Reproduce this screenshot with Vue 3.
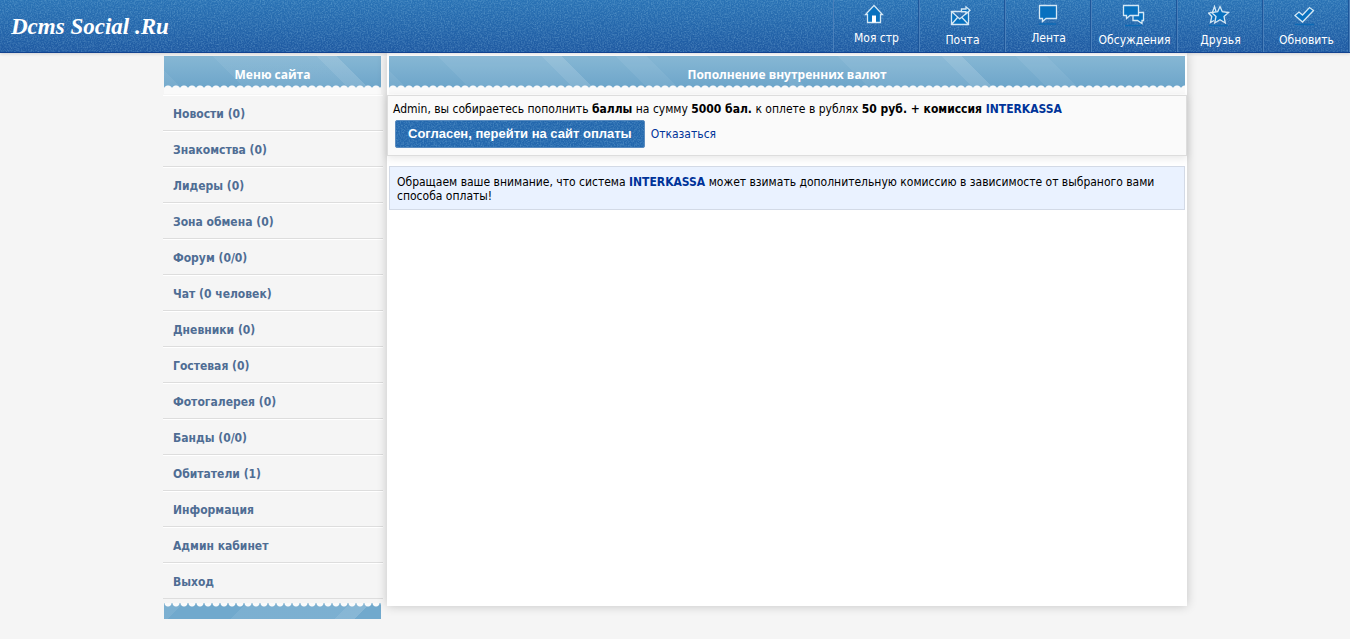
<script setup>
const nav = [
  { label: 'Моя стр', icon: 'home', tall: false },
  { label: 'Почта', icon: 'mail', tall: true },
  { label: 'Лента', icon: 'feed', tall: false },
  { label: 'Обсуждения', icon: 'talk', tall: true },
  { label: 'Друзья', icon: 'star', tall: true },
  { label: 'Обновить', icon: 'check', tall: true },
]
const menu = [
  'Новости (0)', 'Знакомства (0)', 'Лидеры (0)', 'Зона обмена (0)', 'Форум (0/0)',
  'Чат (0 человек)', 'Дневники (0)', 'Гостевая (0)', 'Фотогалерея (0)', 'Банды (0/0)',
  'Обитатели (1)', 'Информация', 'Админ кабинет', 'Выход',
]
</script>

<template>
  <div class="page">
    <header class="topbar">
      <svg class="grain" aria-hidden="true">
        <filter id="grain" x="0" y="0" width="100%" height="100%">
          <feTurbulence type="fractalNoise" baseFrequency="0.7" numOctaves="2" seed="4" />
          <feColorMatrix values="0 0 0 0 0.45  0 0 0 0 0.75  0 0 0 0 0.92  1.6 0 0 0 -0.62" />
        </filter>
        <rect width="100%" height="100%" filter="url(#grain)" />
      </svg>
      <a class="logo" href="#">Dcms Social .Ru</a>
      <nav class="nav">
        <a v-for="n in nav" :key="n.icon" href="#" class="nav-item">
          <svg class="icon" :class="{ tall: n.tall }" viewBox="0 0 24 24" aria-hidden="true">
            <template v-if="n.icon === 'home'">
              <path class="fill" d="M10 2.500 1.500 11.500H3.500V19.500H16.500V11.500H18.500Z" />
              <path class="white" d="M8 12.500H12V19.500H8Z" />
            </template>
            <template v-else-if="n.icon === 'mail'">
              <path class="fill" d="M1.500 8.500H18.500V21.500H1.500ZM1.500 8.500 9.700 16 18.500 8.500M1.500 21.500 7.500 14.500M18.500 21.500 12 14.500" />
              <path class="fill" d="M11.500 6H16V3.800L20 7.200 16 10.800V8.700H11.500Z" />
            </template>
            <template v-else-if="n.icon === 'feed'">
              <path class="fill" d="M3.500 2.500H20.500V15.500H10L6.500 18.500V15.500H3.500Z" />
              <path class="under" d="M3 21H20" />
            </template>
            <template v-else-if="n.icon === 'talk'">
              <path class="fill" d="M11 9.500H21.500V17.500H20V20.500L15.500 17.500H11Z" />
              <path class="fill" d="M1.500 2.500H16.500V12.500H8L4.500 15.500V12.500H1.500Z" />
              <path class="under" d="M3 22.500H20" />
            </template>
            <template v-else-if="n.icon === 'star'">
              <path class="fill" d="M8 8.500 6.500 3.500 4.500 9.300 0.500 10 3.800 13.500 2.500 19.500 6 17.500" />
              <path class="fill" d="M12 3.500 14.300 8.700 20.500 9.500 16 13.500 17.300 20 12 16.700 6.700 20 8 13.500 3.500 9.500 9.700 8.700Z" />
              <path class="under" d="M1 22.500H20" />
            </template>
            <template v-else>
              <path class="fill" d="M1 12.500 5 9 8.500 12 15.500 4.500 19.500 7.500 8.500 19Z" />
              <path class="under" d="M1 21.500H20" />
            </template>
          </svg>
          <span>{{ n.label }}</span>
        </a>
      </nav>
    </header>

    <div class="columns">
      <aside class="side">
        <h2 class="title">Меню сайта</h2>
        <ul class="menu">
          <li v-for="m in menu" :key="m"><a href="#">{{ m }}</a></li>
        </ul>
        <div class="side-foot"></div>
      </aside>

      <main class="content">
        <h1 class="title wide">Пополнение внутренних валют</h1>
        <form class="order" @submit.prevent>
          <p>Admin, вы собираетесь пополнить <b>баллы</b> на сумму <b>5000 бал.</b> к оплете в рублях <b>50 руб. + комиссия <a href="#">INTERKASSA</a></b></p>
          <div class="actions">
            <button type="submit">
              <svg class="grain" aria-hidden="true"><rect width="100%" height="100%" filter="url(#grain)" /></svg>
              <span>Согласен, перейти на сайт оплаты</span>
            </button>
            <a href="#">Отказаться</a>
          </div>
        </form>
        <p class="note">Обращаем ваше внимание, что система <b><a href="#">INTERKASSA</a></b> может взимать дополнительную комиссию в зависимосте от выбраного вами способа оплаты!</p>
      </main>
    </div>
  </div>
</template>

<style>
body { margin: 0; background: #f5f5f5; }
</style>

<style scoped>
.page {
  min-height: 100vh;
  font: 12px/14px "DejaVu Sans Condensed", "DejaVu Sans", sans-serif;
  color: #000;
}
a { color: #039; text-decoration: none; }
p, h1, h2, ul { margin: 0; padding: 0; }
.topbar {
  position: relative;
  display: flex;
  justify-content: space-between;
  height: 52px;
  background: linear-gradient(#2a73b5, #1f5aa2);
  border-bottom: 1px solid #124390;
  box-shadow: 0 1px 3px rgba(0, 0, 0, 0.15);
}
.grain { position: absolute; inset: 0; width: 100%; height: 100%; opacity: 0.36; }
.logo {
  position: relative;
  padding-left: 11px;
  font: italic bold 23px/54px "Liberation Serif", serif;
  color: #fff;
}
.nav { position: relative; display: flex; border-left: 1px solid #4a80bb; }
.nav-item {
  display: flex;
  flex-direction: column;
  align-items: center;
  box-sizing: border-box;
  width: 86px;
  padding-top: 3px;
  border-right: 1px solid #4a80bb;
  box-shadow: inset -1px 0 #1d569a;
  color: #fff;
  white-space: nowrap;
}
.icon { flex: none; width: 24px; height: 24px; margin: 0 2px 4px 0; }
.icon.tall { margin-bottom: 6px; }
.fill { fill: #0871bf; stroke: #d5e8f5; stroke-width: 1.3; }
.white { fill: #fff; }
.under { stroke: #0b68b4; stroke-width: 1.5; }
.columns {
  display: flex;
  align-items: flex-start;
  gap: 4px;
  max-width: 1024px;
  margin: 0 auto;
}
.side { flex: 0 0 220px; padding-top: 3px; }
/* stripes lean from the upper left to the lower right, above a scalloped edge */
.title {
  box-sizing: border-box;
  height: 38px;
  margin: 0 2px 0 1px;
  padding-top: 10px;
  text-align: center;
  font: bold 12px/18px "Open Sans", sans-serif;
  color: #fff;
  background:
    radial-gradient(circle at 4px 5px, #fafafa 4px, transparent 5px) 0 29px / 8px 5px repeat-x,
    linear-gradient(#fafafa, #fafafa) 0 34px / 100% 4px no-repeat,
    linear-gradient(45deg, rgba(255, 255, 255, 0.06) 14px, transparent 14px 58px, rgba(255, 255, 255, 0.06) 58px 132px, rgba(255, 255, 255, 0.14) 132px 146px, transparent 146px 184px, rgba(255, 255, 255, 0.06) 184px 206px, transparent 206px) 0 0 / 400px 34px repeat-x,
    linear-gradient(#86b7d4, #69a2c8);
}
.title.wide { margin-left: 2px; }
.menu { list-style: none; padding-top: 1px; }
.menu li { border-top: 1px solid #fff; border-bottom: 1px solid #ddd; }
.menu a { display: block; padding: 11px 10px 9px; line-height: 14px; font-weight: bold; color: #4f6d94; }
.side-foot {
  height: 16px;
  margin: 4px 2px 0 1px;
  background:
    radial-gradient(circle at 4px 0, #fafafa 3px, transparent 4px) 0 0 / 8px 5px repeat-x,
    linear-gradient(135deg, rgba(255, 255, 255, 0.08) 14px, transparent 14px 58px, rgba(255, 255, 255, 0.08) 58px 132px, rgba(255, 255, 255, 0.16) 132px 146px, transparent 146px),
    #71a9cd;
}
.content {
  flex: 1;
  min-width: 0;
  min-height: 550px;
  padding-top: 3px;
  background: #fff;
  box-shadow: 0 0 10px rgba(0, 0, 0, 0.2);
}
.order { margin: 1px 0 10px; padding: 6px 5px 5px; border: 1px solid #ddd; background: #fafafa; box-shadow: 0 2px 8px rgba(0, 0, 0, 0.1); }
.actions { display: flex; align-items: center; gap: 6px; padding: 4px 2px 2px; }
button {
  position: relative;
  height: 28px;
  padding: 0 12px;
  border: 1px solid #5a8cc0;
  border-radius: 2px;
  background: #2367ad;
  color: #fff;
  font: bold 13px/16px "Liberation Sans", sans-serif;
}
button span { position: relative; }
.note { margin: 0 2px; padding: 8px 7px 6px; border: 1px solid #d3dae6; background: #eaf2ff; }
</style>
